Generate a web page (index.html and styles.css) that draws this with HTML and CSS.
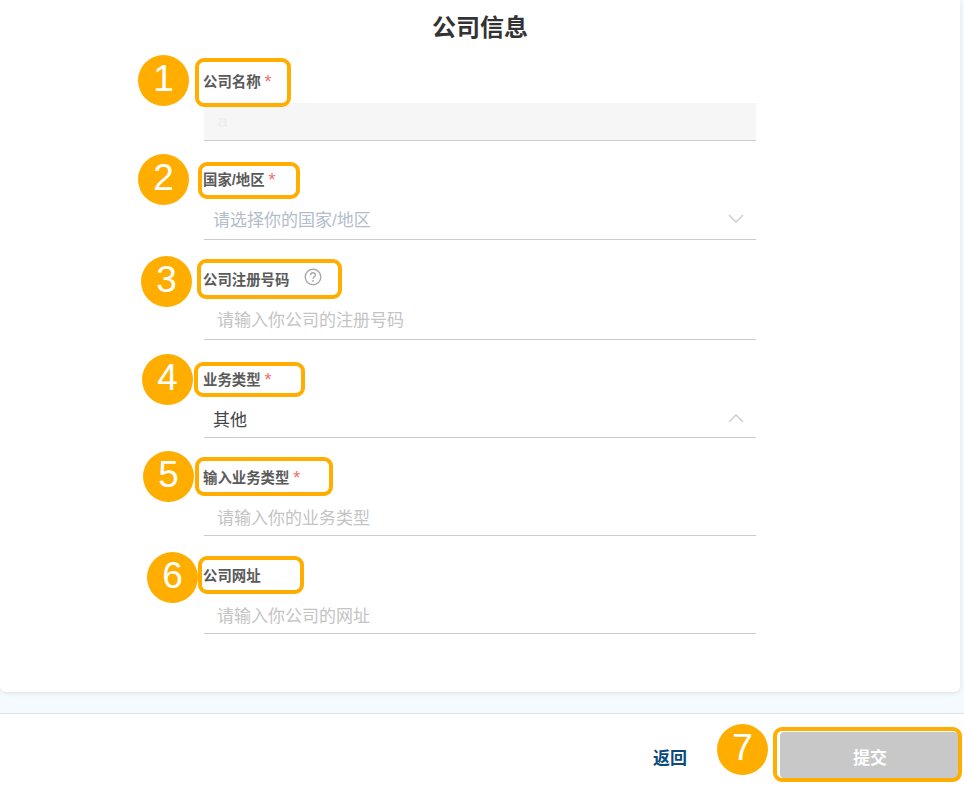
FILE: index.html
```html
<!DOCTYPE html>
<html lang="zh-CN">
<head>
    <meta charset="UTF-8">
    <title>公司信息</title>
    <link rel="stylesheet" href="styles.css">
</head>
<body>
    <div class="page">
        <div class="card">
            <h2>公司信息</h2>
            <form class="company-form">
                <div class="field field-first">
                    <label>公司名称 <span class="req">*</span></label>
                    <div class="control control-disabled"><span class="value-faint">a</span></div>
                </div>
                <div class="field field-wide">
                    <label>国家/地区 <span class="req">*</span></label>
                    <div class="control control-select">
                        <span class="select-hint">请选择你的国家/地区</span>
                        <svg class="chevron" viewBox="0 0 16 9"><path d="M1 1l7 7 7-7"/></svg>
                    </div>
                </div>
                <div class="field field-wide">
                    <label>公司注册号码
                        <svg class="help" viewBox="0 0 18 18">
                            <circle cx="9" cy="9" r="7.8"/>
                            <path d="M6.6 7.2c0-1.5 1.1-2.4 2.4-2.4s2.4.9 2.4 2.2c0 1.9-2.4 1.9-2.4 3.8"/>
                            <circle class="help-dot" cx="9" cy="13" r="0.9"/>
                        </svg>
                    </label>
                    <div class="control"><span class="placeholder">请输入你公司的注册号码</span></div>
                </div>
                <div class="field">
                    <label>业务类型 <span class="req">*</span></label>
                    <div class="control control-select">
                        <span class="select-value">其他</span>
                        <svg class="chevron" viewBox="0 0 16 9"><path d="M1 8l7-7 7 7"/></svg>
                    </div>
                </div>
                <div class="field">
                    <label>输入业务类型 <span class="req">*</span></label>
                    <div class="control"><span class="placeholder">请输入你的业务类型</span></div>
                </div>
                <div class="field">
                    <label>公司网址</label>
                    <div class="control"><span class="placeholder">请输入你公司的网址</span></div>
                </div>
            </form>
        </div>
        <div class="footer">
            <a class="back">返回</a>
            <button class="submit" type="button">提交</button>
        </div>

        <!-- annotations drawn over the screenshot -->
        <span class="frame frame-1"></span>
        <span class="frame frame-2"></span>
        <span class="frame frame-3"></span>
        <span class="frame frame-4"></span>
        <span class="frame frame-5"></span>
        <span class="frame frame-6"></span>
        <span class="frame frame-7"></span>
        <span class="badge badge-1">1</span>
        <span class="badge badge-2">2</span>
        <span class="badge badge-3">3</span>
        <span class="badge badge-4">4</span>
        <span class="badge badge-5">5</span>
        <span class="badge badge-6">6</span>
        <span class="badge badge-7">7</span>
    </div>
</body>
</html>
```

FILE: styles.css
```css
html, body {
    margin: 0;
    height: 100%;
}
body {
    font-family: "Liberation Sans", "Noto Sans CJK SC", sans-serif;
    background-color: #f5fafe;
    overflow: hidden;
}
.page {
    position: relative;
    height: 796px;
    display: flex;
    flex-direction: column;
}

.card {
    height: 692px;
    margin-right: 4px;
    box-sizing: border-box;
    background: #fff;
    border-radius: 0 0 6px 6px;
    box-shadow: 0 1px 5px rgba(0, 0, 0, 0.1);
    padding-top: 12px;
}
h2 {
    margin: 0;
    height: 32px;
    line-height: 32px;
    font-size: 24px;
    font-weight: bold;
    text-align: center;
    color: #333;
}
.company-form {
    width: 552px;
    margin: 26px 0 0 204px;
}

.field {
    margin-bottom: 28px;
}
.field-first {
    margin-bottom: 27px;
}
.field label {
    display: flex;
    align-items: center;
    height: 20px;
    margin-left: -1px;
    font-size: 14.4px;
    font-weight: bold;
    color: #5a5a5a;
}
.req {
    color: #f56c6c;
    font-size: 18px;
    font-weight: normal;
    margin-left: 4px;
    padding-top: 4px;
}
.help {
    width: 18px;
    height: 18px;
    margin: 0 0 2px 15px;
    fill: none;
    stroke: #aaa;
    stroke-width: 1.4;
}
.help-dot {
    fill: #aaa;
    stroke: none;
}

.control {
    height: 37px;
    margin-top: 12px;
    border-bottom: 1px solid #ccc;
    display: flex;
    align-items: center;
    font-size: 17px;
}
.field-first .control {
    margin-top: 13px;
}
.field-wide .control {
    height: 35px;
    padding-bottom: 3px;
    margin-top: 13px;
}
.control-disabled {
    background-color: #f6f6f6;
}
.value-faint {
    margin-left: 14px;
    color: #ececec;
}
.control-select {
    justify-content: space-between;
    padding-left: 9px;
    padding-right: 12px;
}
.placeholder {
    margin-left: 13px;
    color: #c4c4c4;
}
.select-hint {
    color: #b4bccc;
}
.select-value {
    color: #444;
}
.chevron {
    width: 16px;
    height: 9px;
    fill: none;
    stroke: #c8ccd4;
    stroke-width: 1.4;
}

.footer {
    margin-top: 21px;
    flex: 1;
    background: #fff;
    border-top: 1px solid #e0e0e0;
    display: flex;
    justify-content: flex-end;
    align-items: center;
    padding-right: 6px;
}
.back {
    font-size: 17px;
    font-weight: bold;
    color: #0b4a7a;
    margin-right: 93px;
    padding-top: 3px;
}
.submit {
    width: 178px;
    height: 46px;
    border: none;
    border-radius: 4px;
    background-color: #c8c8c8;
    color: #fff;
    font-family: inherit;
    font-size: 17px;
    font-weight: bold;
    padding: 3px 0 0 2px;
}

.frame {
    position: absolute;
    box-sizing: border-box;
    border: 4px solid #ffae00;
    border-radius: 9px;
}
.frame-1 { left: 195px; top: 58px; width: 96px; height: 49px; }
.frame-2 { left: 198px; top: 162px; width: 102px; height: 37px; }
.frame-3 { left: 197px; top: 259px; width: 145px; height: 40px; }
.frame-4 { left: 194px; top: 362px; width: 111px; height: 35px; }
.frame-5 { left: 195px; top: 457px; width: 138px; height: 39px; }
.frame-6 { left: 198px; top: 556px; width: 106px; height: 38px; }
.frame-7 { left: 773px; top: 727px; width: 189px; height: 55px; }

.badge {
    position: absolute;
    width: 51px;
    height: 51px;
    border-radius: 50%;
    background-color: #ffae00;
    color: #fff;
    font-size: 37px;
    line-height: 47px;
    text-align: center;
}
.badge-1 { left: 138px; top: 55px; }
.badge-2 { left: 138px; top: 154px; }
.badge-3 { left: 141px; top: 256px; }
.badge-4 { left: 142px; top: 354px; }
.badge-5 { left: 143px; top: 451px; }
.badge-6 { left: 147px; top: 552px; }
.badge-7 { left: 717px; top: 724px; }
```
